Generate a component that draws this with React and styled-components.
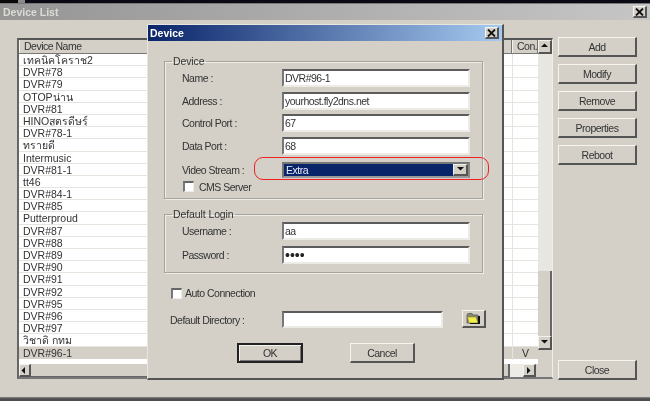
import React from "react";
import styled, { createGlobalStyle } from "styled-components";

const Global = createGlobalStyle`
  html, body { margin: 0; padding: 0; background: #d4d0c8; }
  * { box-sizing: border-box; }
`;

const Page = styled.div`
  position: relative;
  width: 650px;
  height: 401px;
  overflow: hidden;
  display: flex;
  flex-direction: column;
  background: #d4d0c8;
  color: #2c2c2c;
  font: 10.5px "Liberation Sans", Arial, "Noto Sans", sans-serif;
  letter-spacing: -0.5px;
  filter: blur(0.45px);
`;

const TopStrip = styled.div`
  height: 4px;
  background: linear-gradient(90deg, #0a0a0a 0 18px, #8a8a8a 18px 25px, #0a0a14 25px);
  border-bottom: 1px solid #777;
`;

const TitleBar = styled.div`
  height: 16px;
  padding: 0 3px;
  display: flex;
  align-items: center;
  justify-content: space-between;
  background: linear-gradient(90deg, #959595, #c6c6c6);
  color: #dcdcd4;
  font-weight: 700;
  font-size: 10.5px;
  letter-spacing: 0;
`;

const Body = styled.div`
  flex: 1;
  display: flex;
  gap: 5px;
  padding: 18px 13px 0 17px;
  height: 360px;
`;

const BottomStrip = styled.div`
  height: 19px;
  flex: none;
  margin-top: auto;
  background: linear-gradient(#d4d0c8 0 15px, #888 15px, #4c4c4c 17px);
`;

const ListFrame = styled.div`
  width: 536px;
  height: 341px;
  display: flex;
  flex-direction: column;
  background: #fff;
  border-top: 2px solid #555;
  border-left: 2px solid #666;
  border-right: 1px solid #f0eee8;
  border-bottom: 2px solid #777;
`;

const ListMain = styled.div`
  flex: 1;
  display: flex;
  min-height: 0;
`;

const Table = styled.div`
  flex: 1;
  display: flex;
  flex-direction: column;
`;

const HeaderRow = styled.div`
  height: 14px;
  display: grid;
  grid-template-columns: 1fr 26px;
  background: #d4d0c8;
  border-bottom: 1px solid #777;
`;

const HeaderCell = styled.div`
  padding-left: 4px;
  line-height: 13px;
  color: #333;
  border-left: 1px solid #f4f2ec;
  border-right: 1px solid #777;
`;

const Row = styled.div`
  height: 12.2px;
  display: grid;
  grid-template-columns: 1fr 26px;
  line-height: 13px;
  font-size: 10.5px;
  letter-spacing: 0;
  background: ${(p) => (p.$selected ? "#d4d0c8" : "#fff")};
  border-bottom: 1px solid ${(p) => (p.$selected ? "#d4d0c8" : "#e6e4de")};
`;

const NameCell = styled.div`
  padding-left: 4px;
  white-space: nowrap;
  overflow: hidden;
  color: #333;
`;

const ConCell = styled.div`
  text-align: center;
  border-left: 1px solid #e6e4de;
`;

const VScroll = styled.div`
  width: 14px;
  display: flex;
  flex-direction: column;
  background: #e8e6e0;
`;

const VThumb = styled.div`
  margin-top: 217px;
  flex: 1;
  background: #d4d0c8;
  border-right: 2px solid #666;
`;

const Corner = styled.div`
  height: 14px;
  background: #d4d0c8;
`;

const ScrollBtn = styled.div`
  width: ${(p) => p.$w || 13}px;
  height: ${(p) => p.$h || 13}px;
  flex: none;
  display: flex;
  align-items: center;
  justify-content: center;
  background: #d4d0c8;
  border-top: 1px solid #f4f2ec;
  border-left: 1px solid #f4f2ec;
  border-right: 2px solid #555;
  border-bottom: 2px solid #555;
`;

const HScroll = styled.div`
  height: 13px;
  flex: none;
  display: flex;
  background: #d4d0c8;
`;

const HThumb = styled.div`
  width: 479px;
  background: #d4d0c8;
  border-right: 2px solid #666;
  border-bottom: 1px solid #666;
`;

const HTrack = styled.div`
  width: 13px;
  background: #ecebe5;
`;

const SideColumn = styled.div`
  width: 79px;
  height: 343px;
  margin-top: -1px;
  display: flex;
  flex-direction: column;
  gap: 7px;
`;

const Raised = styled.button`
  display: block;
  padding: 0;
  font: inherit;
  letter-spacing: inherit;
  color: #333;
  background: #d4d0c8;
  border-top: 1px solid #f6f4ee;
  border-left: 1px solid #f6f4ee;
  border-right: 2px solid #555;
  border-bottom: 2px solid #555;
`;

const SideButton = styled(Raised)`
  height: 20px;
  ${(p) => p.$bottom && "margin-top: auto;"}
`;

const CloseX = styled(Raised)`
  width: 14px;
  height: 12px;
  display: flex;
  align-items: center;
  justify-content: center;
`;

const Dialog = styled.div`
  position: absolute;
  left: 147px;
  top: 24px;
  width: 357px;
  height: 356px;
  display: flex;
  flex-direction: column;
  background: #d4d0c8;
  border-top: 1px solid #e8e6e0;
  border-left: 1px solid #e8e6e0;
  border-right: 2px solid #555;
  border-bottom: 2px solid #555;
`;

const DialogTitle = styled.div`
  height: 16px;
  flex: none;
  padding: 0 3px 0 2px;
  display: flex;
  align-items: center;
  justify-content: space-between;
  background: linear-gradient(90deg, #0a246a, #a6caf0);
  color: #fff;
  font-weight: 700;
  font-size: 10.5px;
  letter-spacing: 0;
`;

const DialogBody = styled.div`
  flex: 1;
  padding: 14px 19px 0 16px;
  display: flex;
  flex-direction: column;
`;

const Group = styled.fieldset`
  margin: 0;
  min-width: 0;
  height: ${(p) => p.$h}px;
  margin-bottom: ${(p) => p.$mb || 0}px;
  padding: 2px 12px 0 17px;
  border: 1px solid #a5a29b;
  box-shadow: inset 1px 1px 0 #efede7, 1px 1px 0 #efede7;
  display: flex;
  flex-direction: column;
  gap: ${(p) => p.$gap}px;
`;

const Legend = styled.legend`
  margin-left: -10px;
  padding: 0 1px;
  line-height: 12px;
  font-size: 10.5px;
  letter-spacing: -0.1px;
  color: #333;
`;

const FieldRow = styled.div`
  display: flex;
  align-items: center;
  margin-top: ${(p) => p.$mt || 0}px;
`;

const Label = styled.label`
  width: ${(p) => p.$w || 100}px;
  flex: none;
  color: #333;
`;

const Input = styled.div`
  width: ${(p) => p.$w || 188}px;
  height: ${(p) => p.$h || 18}px;
  flex: none;
  padding-left: 1px;
  line-height: 15px;
  background: #fff;
  color: #333;
  border-top: 2px solid #5c5c5c;
  border-left: 2px solid #777;
  border-right: 2px solid #ecebe5;
  border-bottom: 2px solid #ecebe5;
  white-space: nowrap;
  overflow: hidden;
`;

const PasswordInput = styled(Input)`
  font-size: 14px;
  letter-spacing: 0;
  line-height: 14px;
  color: #222;
`;

const Combo = styled.div`
  width: 188px;
  height: 16px;
  display: flex;
  background: #0a246a;
  border: 2px solid #777;
  border-right-color: #888;
  border-bottom-color: #999;
`;

const ComboValue = styled.div`
  flex: 1;
  padding-left: 2px;
  line-height: 12px;
  color: #e8ecf6;
`;

const ComboBtn = styled(ScrollBtn)`
  width: 15px;
  height: 12px;
`;

const CheckRow = styled.div`
  display: flex;
  align-items: center;
  gap: ${(p) => p.$gap}px;
  margin-left: ${(p) => p.$ml || 0}px;
  margin-top: ${(p) => p.$mt || 0}px;
  color: #333;
`;

const CheckBox = styled.span`
  width: 11px;
  height: 11px;
  flex: none;
  background: #fff;
  border-top: 2px solid #666;
  border-left: 2px solid #777;
  border-right: 1px solid #ecebe5;
  border-bottom: 1px solid #ecebe5;
`;

const DirRow = styled(FieldRow)`
  margin-top: 12px;
  margin-left: 6px;
  margin-right: -6px;
`;

const FolderBtn = styled(Raised)`
  width: 24px;
  height: 18px;
  flex: none;
  margin-left: 19px;
  margin-top: -1px;
  display: flex;
  align-items: center;
  justify-content: center;
`;

const ActionRow = styled.div`
  margin-top: 15px;
  margin-left: 73px;
  display: flex;
  gap: 47px;
`;

const OkButton = styled(Raised)`
  width: 66px;
  height: 20px;
  border: 2px solid #222;
  box-shadow: inset 1px 1px 0 #f6f4ee, inset -1px -1px 0 #777;
`;

const CancelButton = styled(Raised)`
  width: 65px;
  height: 20px;
`;

const RedMark = styled.div`
  position: absolute;
  left: 254px;
  top: 157px;
  width: 235px;
  height: 23px;
  border: 1.5px solid #ee2222;
  border-radius: 9px;
  pointer-events: none;
`;

const Arrow = ({ dir }) => {
  const pts = {
    up: "0,4 3.5,0.5 7,4",
    down: "0,1 7,1 3.5,4.5",
    left: "4,0 4,7 0.5,3.5",
    right: "1,0 1,7 4.5,3.5",
  }[dir];
  return (
    <svg width="7" height="7" viewBox="0 0 7 7">
      <polygon points={pts} fill="#111" />
    </svg>
  );
};

const XIcon = () => (
  <svg width="9" height="8" viewBox="0 0 9 8">
    <path d="M1 0.5 L8 7.5 M8 0.5 L1 7.5" stroke="#111" strokeWidth="1.8" />
  </svg>
);

const FolderIcon = () => (
  <svg width="15" height="13" viewBox="0 0 15 13">
    <path d="M1 3 L2 1.5 H6 L7 3 H12 V11 H1 Z" fill="#8a8a70" stroke="#555" strokeWidth="0.8" />
    <path d="M1.5 5 H10 L12 11 H3 Z" fill="#f2ee50" stroke="#807c30" strokeWidth="0.6" />
    <path d="M12 4 H14 V12 H4 V11 H12 Z" fill="#111" />
  </svg>
);

const devices = [
  "เทคนิคโคราช2", "DVR#78", "DVR#79", "OTOPน่าน", "DVR#81", "HINOสูตรดีษรุ์", "DVR#78-1",
  "ทรายดี", "Intermusic", "DVR#81-1", "tt46", "DVR#84-1", "DVR#85", "Putterproud", "DVR#87",
  "DVR#88", "DVR#89", "DVR#90", "DVR#91", "DVR#92", "DVR#95", "DVR#96", "DVR#97",
  "วิชาดิ กทม", "DVR#96-1",
];

const sideButtons = ["Add", "Modify", "Remove", "Properties", "Reboot"];

export default function App() {
  return (
    <Page>
      <Global />
      <TopStrip />
      <TitleBar>
        <span>Device List</span>
        <CloseX><XIcon /></CloseX>
      </TitleBar>
      <Body>
        <ListFrame>
          <ListMain>
            <Table>
              <HeaderRow>
                <HeaderCell>Device Name</HeaderCell>
                <HeaderCell>Con.</HeaderCell>
              </HeaderRow>
              {devices.map((name, i) => (
                <Row key={name} $selected={i === devices.length - 1}>
                  <NameCell>{name}</NameCell>
                  <ConCell>{i === devices.length - 1 ? "V" : ""}</ConCell>
                </Row>
              ))}
            </Table>
            <VScroll>
              <ScrollBtn $w={14} $h={14}><Arrow dir="up" /></ScrollBtn>
              <VThumb />
              <ScrollBtn $w={14} $h={14}><Arrow dir="down" /></ScrollBtn>
              <Corner />
            </VScroll>
          </ListMain>
          <HScroll>
            <ScrollBtn $w={12} $h={13}><Arrow dir="left" /></ScrollBtn>
            <HThumb />
            <HTrack />
            <ScrollBtn $w={13} $h={13}><Arrow dir="right" /></ScrollBtn>
          </HScroll>
        </ListFrame>
        <SideColumn>
          {sideButtons.map((b) => (
            <SideButton key={b}>{b}</SideButton>
          ))}
          <SideButton $bottom>Close</SideButton>
        </SideColumn>
      </Body>
      <BottomStrip />

      <Dialog>
        <DialogTitle>
          <span>Device</span>
          <CloseX><XIcon /></CloseX>
        </DialogTitle>
        <DialogBody>
          <Group $h={144} $mb={9} $gap={4.5}>
            <Legend>Device</Legend>
            <FieldRow><Label>Name :</Label><Input>DVR#96-1</Input></FieldRow>
            <FieldRow><Label>Address :</Label><Input>yourhost.fly2dns.net</Input></FieldRow>
            <FieldRow><Label>Control Port :</Label><Input>67</Input></FieldRow>
            <FieldRow><Label>Data Port :</Label><Input>68</Input></FieldRow>
            <FieldRow $mt={3}>
              <Label>Video Stream :</Label>
              <Combo>
                <ComboValue>Extra</ComboValue>
                <ComboBtn><Arrow dir="down" /></ComboBtn>
              </Combo>
            </FieldRow>
            <CheckRow $gap={5} $ml={1} $mt={-2}><CheckBox />CMS Server</CheckRow>
          </Group>
          <Group $h={65} $gap={6}>
            <Legend>Default Login</Legend>
            <FieldRow><Label>Username :</Label><Input>aa</Input></FieldRow>
            <FieldRow><Label>Password :</Label><PasswordInput>••••</PasswordInput></FieldRow>
          </Group>
          <CheckRow $gap={3} $ml={7} $mt={14}><CheckBox />Auto Connection</CheckRow>
          <DirRow>
            <Label $w={112}>Default Directory :</Label>
            <Input $w={161} $h={17} />
            <FolderBtn><FolderIcon /></FolderBtn>
          </DirRow>
          <ActionRow>
            <OkButton>OK</OkButton>
            <CancelButton>Cancel</CancelButton>
          </ActionRow>
        </DialogBody>
      </Dialog>
      <RedMark />
    </Page>
  );
}
